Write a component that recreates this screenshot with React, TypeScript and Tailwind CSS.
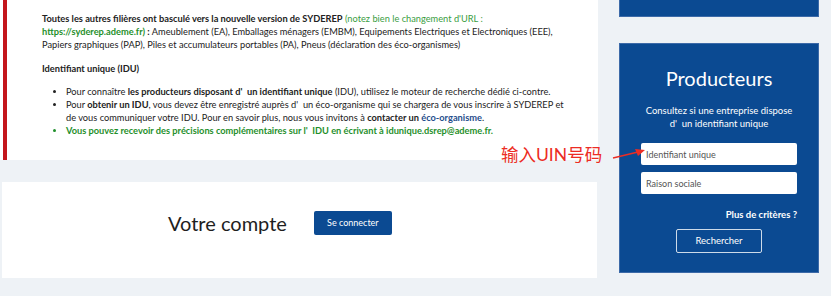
import React from 'react';

const font = { fontFamily: 'Lato, "Noto Sans CJK SC", sans-serif' };

function InfoPanel() {
  return (
    <div className="relative h-[160px] w-[598px] bg-white">
      <div className="absolute left-[3px] top-0 h-full w-[4px] bg-[#c4161c]" />
      <div className="pl-[42px] pt-[12px] text-[9.25px] leading-[13px] text-[#222] whitespace-nowrap">
        <p>
          <b>Toutes les autres filières ont basculé vers la nouvelle version de SYDEREP</b>{' '}
          <span className="text-[#3a9d3f]">(notez bien le changement d'URL :</span>
          <br />
          <b className="text-[#1f8f2b]">https://syderep.ademe.fr)</b> <b>:</b> Ameublement (EA), Emballages ménagers (EMBM), Equipements Electriques et Electroniques (EEE),
          <br />
          Papiers graphiques (PAP), Piles et accumulateurs portables (PA), Pneus (déclaration des éco-organismes)
        </p>
        <p className="mt-[11px] font-bold">Identifiant unique (IDU)</p>
        <ul className="mt-[10px] list-disc pl-[24px]">
          <li>
            Pour connaître <b>les producteurs disposant d'&nbsp;&nbsp;un identifiant unique</b> (IDU), utilisez le moteur de recherche dédié ci-contre.
          </li>
          <li>
            Pour <b>obtenir un IDU</b>, vous devez être enregistré auprès d'&nbsp;&nbsp;un éco-organisme qui se chargera de vous inscrire à SYDEREP et
            <br />
            de vous communiquer votre IDU. Pour en savoir plus, nous vous invitons à <b>contacter un</b>{' '}
            <b className="text-[#1f4e8c]">éco-organisme</b>.
          </li>
          <li className="font-bold text-[#1f8f2b]">
            Vous pouvez recevoir des précisions complémentaires sur l'&nbsp;&nbsp;IDU en écrivant à idunique.dsrep@ademe.fr.
          </li>
        </ul>
      </div>
    </div>
  );
}

function AccountCard() {
  return (
    <div className="ml-[2px] mt-[22px] flex h-[96px] w-[595px] items-start bg-white pt-[29px]">
      <span className="ml-[166px] text-[20px] leading-[24px] text-[#1e1e1e]">Votre compte</span>
      <button className="ml-[27px] h-[24px] w-[78px] rounded-[2px] bg-[#0b4a92] text-[9px] text-white">
        Se connecter
      </button>
    </div>
  );
}

function ProducteursBox() {
  return (
    <div className="mt-[26px] flex h-[230px] w-[200px] flex-col items-center border border-[#3c6aa8] bg-[#0b4a92] text-white">
      <h2 className="mt-[22px] text-[20px] leading-[24px]">Producteurs</h2>
      <p className="mt-[14px] text-center text-[9.5px] leading-[13px]">
        Consultez si une entreprise dispose
        <br />
        d'&nbsp;&nbsp;un identifiant unique
      </p>
      <input
        className="mt-[13px] h-[22px] w-[156px] rounded-[2px] bg-white px-[5px] text-[9px] text-[#333] placeholder:text-[#555]"
        placeholder="Identifiant unique"
      />
      <input
        className="mt-[7px] h-[22px] w-[156px] rounded-[2px] bg-white px-[5px] text-[9px] text-[#333] placeholder:text-[#555]"
        placeholder="Raison sociale"
      />
      <span className="mt-[14px] w-[156px] text-right text-[9.5px] font-bold">Plus de critères ?</span>
      <button className="mt-[7px] h-[24px] w-[86px] rounded-[2px] border border-white/80 text-[9.5px]">
        Rechercher
      </button>
    </div>
  );
}

export default function App() {
  return (
    <div className="relative flex h-[296px] w-[831px] overflow-hidden bg-[#eef2f6]" style={font}>
      <div className="flex flex-col">
        <InfoPanel />
        <AccountCard />
      </div>
      <div className="ml-[21px] flex flex-col">
        <div className="h-[17px] w-[200px] border-b border-x border-[#3c6aa8] bg-[#0b4a92]" />
        <ProducteursBox />
      </div>

      {/* annotation */}
      <div className="absolute left-[501px] top-[145px] text-[17.5px] leading-[20px] text-[#ec2d24]">输入UIN号码</div>
      <svg className="absolute left-[610px] top-[146px]" width="40" height="16" viewBox="0 0 40 16">
        <path d="M3 12 L28 6" stroke="#ec2d24" strokeWidth="1.5" />
        <path d="M35 4 L25 3 L28 10 Z" fill="#ec2d24" />
      </svg>
    </div>
  );
}
